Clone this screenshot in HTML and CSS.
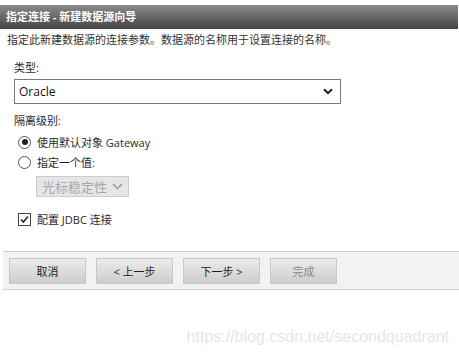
FILE: index.html
```html
<!DOCTYPE html>
<html>
<head>
<meta charset="utf-8">
<link rel="stylesheet" href="styles.css">
</head>
<body>
<div class="title">指定连接 - 新建数据源向导</div>
<div class="desc">指定此新建数据源的连接参数。数据源的名称用于设置连接的名称。</div>
<div class="content">
  <div class="label first">类型:</div>
  <div class="select">
    <span class="select-text">Oracle</span>
    <svg class="chev" width="10" height="7" viewBox="0 0 10 7"><path d="M1 1.2 L5 5.2 L9 1.2" fill="none" stroke="#1c1c2a" stroke-width="2"/></svg>
  </div>
  <div class="label second">隔离级别:</div>
  <div class="row r1"><span class="radio checked"></span><span>使用默认对象 Gateway</span></div>
  <div class="row r2"><span class="radio"></span><span>指定一个值:</span></div>
  <div class="combo"><span class="combo-text">光标稳定性</span>
    <svg class="chev2" width="11" height="7" viewBox="0 0 11 7"><path d="M1 1 L5.5 5.5 L10 1" fill="none" stroke="#a8a8a8" stroke-width="1.8"/></svg>
  </div>
  <div class="row r3"><span class="check"><svg width="11" height="11" viewBox="0 0 11 11"><path d="M2 5.5 L4.3 8 L9 2.5" fill="none" stroke="#222" stroke-width="1.5"/></svg></span><span>配置 JDBC 连接</span></div>
</div>
<div class="buttons">
  <div class="btn">取消</div>
  <div class="btn">&lt; 上一步</div>
  <div class="btn">下一步 &gt;</div>
  <div class="btn disabled">完成</div>
</div>
<div class="watermark">https://blog.csdn.net/secondquadrant</div>
</body>
</html>
```
FILE: styles.css
```css
body {
  margin: 0;
  font-family: "Open Sans", "Noto Sans CJK SC", sans-serif;
  font-size: 11px;
  color: #333;
  background: #fff;
  position: relative;
  height: 355px;
}
.title {
  margin-top: 5px;
  margin-right: 1px;
  height: 24px;
  line-height: 24px;
  padding-left: 6px;
  background: linear-gradient(#8a8a8a, #444);
  color: #fff;
  font-weight: bold;
  font-size: 11px;
}
.desc {
  margin-top: 3px;
  height: 16px;
  line-height: 16px;
  padding-left: 7px;
  color: #333;
}
.content {
  padding-left: 14px;
}
.label {
  height: 16px;
  line-height: 16px;
  color: #2a2a2a;
}
.label.first { margin-top: 12px; }
.label.second { margin-top: 9px; }
.select {
  margin-top: 3px;
  height: 23px;
  border: 1px solid #7a7a7a;
  display: flex;
  align-items: center;
  justify-content: space-between;
  padding: 0 7px 0 4px;
  width: 314px;
}
.select-text {
  font-size: 12px;
  color: #111;
}
.row {
  display: flex;
  align-items: center;
  height: 18px;
  padding-left: 4px;
  gap: 6px;
  color: #2a2a2a;
}
.r1 { margin-top: 4px; }
.r2 { margin-top: 2px; }
.r3 { margin-top: 13px; }
.radio {
  width: 11px;
  height: 11px;
  border: 1px solid #555;
  border-radius: 50%;
  position: relative;
  background: #fff;
}
.radio.checked::after {
  content: "";
  position: absolute;
  left: 2.5px;
  top: 2.5px;
  width: 6px;
  height: 6px;
  border-radius: 50%;
  background: #222;
}
.check {
  width: 11px;
  height: 11px;
  border: 1px solid #444;
  display: flex;
  align-items: center;
  justify-content: center;
  background: #fff;
}
.combo {
  margin-top: 5px;
  margin-left: 22px;
  border: 1px solid #ccc;
  background: #e6e6e6;
  display: flex;
  align-items: center;
  justify-content: space-between;
  padding: 0 5px;
  box-sizing: border-box;
  width: 93px;
  height: 21px;
}
.combo-text {
  font-size: 13px;
  color: #a8a8a8;
}
.buttons {
  margin-top: 23px;
  margin-left: 3px;
  border-top: 1px solid #cfcfcf;
  border-bottom: 1px solid #cfcfcf;
  background: #f2f2f2;
  display: flex;
  align-items: flex-start;
  gap: 10px;
  padding: 6px 0 0 6px;
  height: 31px;
}
.btn {
  width: 77px;
  height: 26px;
  box-sizing: border-box;
  border: 1px solid #c8c8c8;
  background: linear-gradient(#ececec, #cdcdcd);
  display: flex;
  align-items: center;
  justify-content: center;
  color: #1e1e1e;
  font-size: 11px;
}
.btn.disabled {
  width: 67px;
  color: #8a8a8a;
}
.watermark {
  position: absolute;
  right: 10px;
  top: 328px;
  font-family: "Liberation Sans", Arial, sans-serif;
  font-size: 16px;
  color: #e6e6e6;
}
```
